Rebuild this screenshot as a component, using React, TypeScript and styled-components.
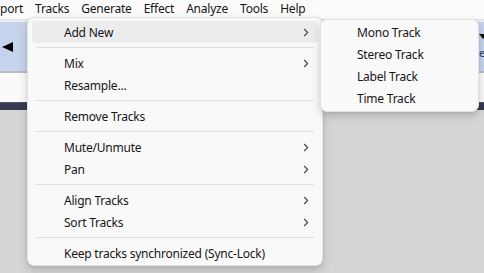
import React from "react";
import styled, { createGlobalStyle } from "styled-components";

const GlobalStyle = createGlobalStyle`
  html, body {
    margin: 0;
    padding: 0;
    background: #d5d5d5;
  }
  body {
    font-family: "Noto Sans", "Open Sans", sans-serif;
    font-size: 12px;
    letter-spacing: -0.22px;
    color: #161616;
  }
`;

type Entry =
  | { kind: "item"; label: string; sub?: boolean; active?: boolean }
  | { kind: "sep" };

const tracksMenu: Entry[] = [
  { kind: "item", label: "Add New", sub: true, active: true },
  { kind: "sep" },
  { kind: "item", label: "Mix", sub: true },
  { kind: "item", label: "Resample..." },
  { kind: "sep" },
  { kind: "item", label: "Remove Tracks" },
  { kind: "sep" },
  { kind: "item", label: "Mute/Unmute", sub: true },
  { kind: "item", label: "Pan", sub: true },
  { kind: "sep" },
  { kind: "item", label: "Align Tracks", sub: true },
  { kind: "item", label: "Sort Tracks", sub: true },
  { kind: "sep" },
  { kind: "item", label: "Keep tracks synchronized (Sync-Lock)" },
];

const addNewMenu = ["Mono Track", "Stereo Track", "Label Track", "Time Track"];

const topMenus = ["port", "Tracks", "Generate", "Effect", "Analyze", "Tools", "Help"];

function Chevron() {
  return (
    <svg width="6" height="9" viewBox="0 0 6 9">
      <path d="M1.2 1 L4.6 4.5 L1.2 8" fill="none" stroke="#4a4a4a" strokeWidth="1.2" />
    </svg>
  );
}

export default function App() {
  return (
    <>
      <GlobalStyle />
      <Screen>
        <MenuBar>
          {topMenus.map((m) => (
            <BarItem key={m}>{m}</BarItem>
          ))}
        </MenuBar>
        <Workspace>
          <ToolBand>
            <PlayBack />
            <RightTools>
              <DropArrow />
            </RightTools>
          </ToolBand>
          <RulerBand>
            <RulerLabel>e</RulerLabel>
          </RulerBand>
          <TrackEdge />
        </Workspace>

        <Menu>
          {tracksMenu.map((e, i) =>
            e.kind === "sep" ? (
              <Separator key={i} />
            ) : (
              <Item key={i} $active={e.active}>
                <span>{e.label}</span>
                {e.sub && <Chevron />}
              </Item>
            )
          )}
        </Menu>

        <SubMenu>
          {addNewMenu.map((l) => (
            <Item key={l}>{l}</Item>
          ))}
        </SubMenu>
      </Screen>
    </>
  );
}

const Screen = styled.div`
  position: relative;
  width: 484px;
  height: 273px;
  overflow: hidden;
  background: #d5d5d5;
`;

const MenuBar = styled.div`
  display: flex;
  height: 19px;
  align-items: center;
  margin-left: -6px;
  background: #fbfbfb;
  border-bottom: 1px solid #e4e4e4;
`;

const BarItem = styled.div`
  padding: 0 6px 2px;
  white-space: nowrap;
`;

const Workspace = styled.div`
  display: flex;
  flex-direction: column;
  padding-top: 2px;
  background: linear-gradient(#ececec 0 2px, #d5d5d5 2px);
`;

const ToolBand = styled.div`
  display: flex;
  align-items: center;
  justify-content: space-between;
  height: 49px;
  background: #c6d3ec;
  border-bottom: 2px solid #b9bcc4;
`;

const PlayBack = styled.div`
  width: 0;
  height: 0;
  margin-left: 2px;
  border-top: 5px solid transparent;
  border-bottom: 5px solid transparent;
  border-right: 11px solid #000;
`;

const RightTools = styled.div`
  align-self: flex-start;
  padding-top: 12px;
`;

const DropArrow = styled.div`
  width: 0;
  height: 0;
  border-left: 4px solid transparent;
  border-right: 4px solid transparent;
  border-top: 5px solid #111;
  margin-right: -3px;
`;

const RulerBand = styled.div`
  display: flex;
  justify-content: flex-end;
  height: 29px;
  background: #fafafa;
`;

const RulerLabel = styled.span`
  font-size: 11px;
  line-height: 11px;
  color: #2a3d6a;
  margin-right: -1px;
  margin-top: -26px;
`;

const TrackEdge = styled.div`
  height: 7px;
  background: #353a4e;
  border-top: 1px solid #50566a;
`;

const Panel = styled.div`
  position: absolute;
  box-sizing: border-box;
  display: flex;
  flex-direction: column;
  background: #f9f9f9;
  border: 1px solid #e3e3e3;
  border-radius: 7px;
  box-shadow: 0 4px 10px rgba(0, 0, 0, 0.16), 0 1px 3px rgba(0, 0, 0, 0.08);
`;

const Menu = styled(Panel)`
  left: 27px;
  top: 17px;
  width: 296px;
  padding: 3px 4px 1px;
`;

const SubMenu = styled(Panel)`
  left: 320px;
  top: 19px;
  width: 159px;
  padding: 1px 4px 2px;
`;

const Item = styled.div<{ $active?: boolean }>`
  display: flex;
  align-items: center;
  justify-content: space-between;
  height: 22px;
  padding: 0 9px 0 32px;
  border-radius: 4px;
  white-space: nowrap;
  background: ${(p) => (p.$active ? "#ececec" : "transparent")};
`;

const Separator = styled.div`
  height: 1px;
  margin: 4px;
  background: #dedede;
`;
